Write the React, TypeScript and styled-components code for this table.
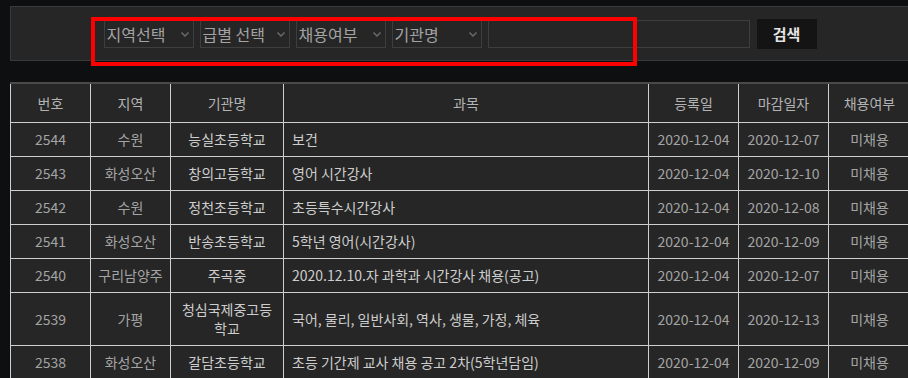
import React from "react";
import styled, { createGlobalStyle } from "styled-components";

const GlobalStyle = createGlobalStyle`
  html, body {
    margin: 0;
    padding: 0;
    background: #0e0f11;
    overflow: hidden;
  }
  body {
    font-family: "Noto Sans CJK KR", "Noto Sans", sans-serif;
  }
`;

type Post = {
  no: number;
  region: string;
  school: string;
  subject: string;
  created: string;
  deadline: string;
  status: string;
};

const posts: Post[] = [
  { no: 2544, region: "수원", school: "능실초등학교", subject: "보건", created: "2020-12-04", deadline: "2020-12-07", status: "미채용" },
  { no: 2543, region: "화성오산", school: "창의고등학교", subject: "영어 시간강사", created: "2020-12-04", deadline: "2020-12-10", status: "미채용" },
  { no: 2542, region: "수원", school: "정천초등학교", subject: "초등특수시간강사", created: "2020-12-04", deadline: "2020-12-08", status: "미채용" },
  { no: 2541, region: "화성오산", school: "반송초등학교", subject: "5학년 영어(시간강사)", created: "2020-12-04", deadline: "2020-12-09", status: "미채용" },
  { no: 2540, region: "구리남양주", school: "주곡중", subject: "2020.12.10.자 과학과 시간강사 채용(공고)", created: "2020-12-04", deadline: "2020-12-07", status: "미채용" },
  { no: 2539, region: "가평", school: "청심국제중고등학교", subject: "국어, 물리, 일반사회, 역사, 생물, 가정, 체육", created: "2020-12-04", deadline: "2020-12-13", status: "미채용" },
  { no: 2538, region: "화성오산", school: "갈담초등학교", subject: "초등 기간제 교사 채용 공고 2차(5학년담임)", created: "2020-12-04", deadline: "2020-12-09", status: "미채용" },
];

const selects = ["지역선택", "급별 선택", "채용여부", "기관명"];

const Chevron = () => (
  <svg width="10" height="10" viewBox="0 0 10 10" fill="none">
    <path d="M1.5 3.5 L5 7 L8.5 3.5" stroke="#6f6f6f" strokeWidth="1.3" />
  </svg>
);

const App: React.FC = () => {
  return (
    <>
      <GlobalStyle />
      <Page>
        <SearchPanel>
          {selects.map((label) => (
            <Select key={label}>
              <span>{label}</span>
              <Chevron />
            </Select>
          ))}
          <KeywordInput type="text" />
          <SearchButton type="button">검색</SearchButton>
        </SearchPanel>

        <Table>
          <colgroup>
            <col style={{ width: 80 }} />
            <col style={{ width: 80 }} />
            <col style={{ width: 113 }} />
            <col style={{ width: 365 }} />
            <col style={{ width: 90 }} />
            <col style={{ width: 90 }} />
            <col style={{ width: 82 }} />
          </colgroup>
          <thead>
            <tr>
              <Th>번호</Th>
              <Th>지역</Th>
              <Th>기관명</Th>
              <Th>과목</Th>
              <Th>등록일</Th>
              <Th>마감일자</Th>
              <Th>채용여부</Th>
            </tr>
          </thead>
          <tbody>
            {posts.map((p) => (
              <tr key={p.no}>
                <Td>{p.no}</Td>
                <Td $nowrap>{p.region}</Td>
                <Td $bright $wide>{p.school}</Td>
                <Td $bright $left>{p.subject}</Td>
                <Td>{p.created}</Td>
                <Td>{p.deadline}</Td>
                <Td>{p.status}</Td>
              </tr>
            ))}
          </tbody>
        </Table>

        <Highlight />
      </Page>
    </>
  );
};

export default App;

const Page = styled.div`
  position: relative;
  width: 900px;
  padding: 6px 0 0 10px;
  display: flex;
  flex-direction: column;
  gap: 21px;
`;

const SearchPanel = styled.div`
  height: 55px;
  box-sizing: border-box;
  background: #262626;
  border: 1px solid #3a3a3a;
  display: flex;
  align-items: center;
  justify-content: center;
  gap: 6px;
`;

const Select = styled.div`
  width: 90px;
  height: 28px;
  box-sizing: border-box;
  border: 1px solid #3e3e3e;
  padding: 0 3px 0 2px;
  display: flex;
  align-items: center;
  justify-content: space-between;
  color: #a3a3a3;
  font-size: 16px;
  line-height: 1;
  white-space: nowrap;
`;

const KeywordInput = styled.input`
  width: 262px;
  height: 28px;
  box-sizing: border-box;
  background: transparent;
  border: 1px solid #3e3e3e;
  outline: none;
  color: #a3a3a3;
  font-family: inherit;
  font-size: 14px;
`;

const SearchButton = styled.button`
  width: 60px;
  height: 30px;
  margin-left: 1px;
  background: #141414;
  border: none;
  color: #e4e4e4;
  font-family: inherit;
  font-size: 15px;
  font-weight: 700;
  cursor: pointer;
`;

const Table = styled.table`
  width: 900px;
  table-layout: fixed;
  border-collapse: collapse;
  background: #262626;
  border-top: 2px solid #4a4a4a;
  font-size: 14px;
`;

const Th = styled.th`
  height: 38px;
  padding: 0 8px;
  border: 1px solid #cfcfcf;
  border-top: 2px solid #4a4a4a;
  color: #b3b3b3;
  font-weight: 400;
  text-align: center;
`;

const Td = styled.td<{
  $bright?: boolean;
  $left?: boolean;
  $wide?: boolean;
  $nowrap?: boolean;
}>`
  padding: 7px ${({ $wide, $nowrap }) => ($wide ? "10px" : $nowrap ? "2px" : "8px")};
  line-height: 19px;
  border: 1px solid #cfcfcf;
  color: ${({ $bright }) => ($bright ? "#cdcdcd" : "#a4a4a4")};
  text-align: ${({ $left }) => ($left ? "left" : "center")};
  white-space: ${({ $nowrap }) => ($nowrap ? "nowrap" : "normal")};
`;

const Highlight = styled.div`
  position: absolute;
  left: 91px;
  top: 17px;
  width: 546px;
  height: 49px;
  box-sizing: border-box;
  border: 4px solid #ff0000;
  pointer-events: none;
`;
